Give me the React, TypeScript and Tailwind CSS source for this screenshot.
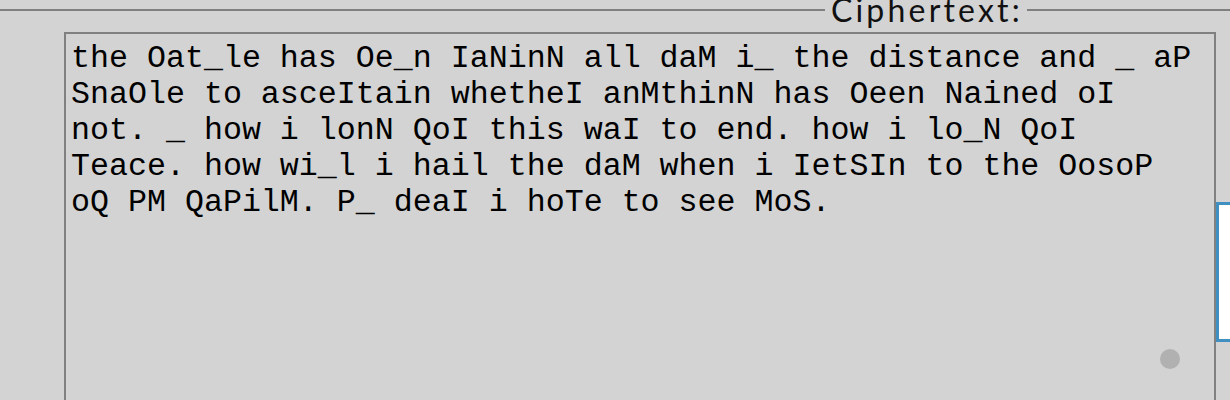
import React from "react";

const lines = [
  "the Oat_le has Oe_n IaNinN all daM i_ the distance and _ aP",
  "SnaOle to asceItain whetheI anMthinN has Oeen Nained oI",
  "not. _ how i lonN QoI this waI to end. how i lo_N QoI",
  "Teace. how wi_l i hail the daM when i IetSIn to the OosoP",
  "oQ PM QaPilM. P_ deaI i hoTe to see MoS.",
];

export default function App() {
  return (
    <div className="w-[1230px] h-[400px] bg-[#d3d3d3] overflow-hidden">
      <div className="flex items-center h-[20px]">
        <div className="flex-1 h-[2px] bg-[#808080]" />
        <span className="pl-[6px] pr-[4px] font-['Lato',sans-serif] text-[32px] leading-[20px] tracking-[3.2px] text-[#111]">
          Ciphertext:
        </span>
        <div className="w-[203px] h-[2px] bg-[#808080]" />
      </div>
      <div className="flex items-start mt-[12px] pl-[64px]">
        <div className="relative w-[1152px] h-[400px] shrink-0 border-2 border-[#808080] pt-[7px] pl-[5px] font-['Liberation_Mono',monospace] text-[31.65px] leading-[36px] text-black whitespace-pre">
          {lines.map((l, i) => (
            <div key={i}>{l}</div>
          ))}
          <div className="absolute left-[1094px] top-[315px] w-[20px] h-[20px] rounded-full bg-[#b1b1b1]" />
        </div>
        <div className="mt-[170px] w-[40px] h-[140px] shrink-0 border-[3px] border-[#3f8fc0] bg-white" />
      </div>
    </div>
  );
}
